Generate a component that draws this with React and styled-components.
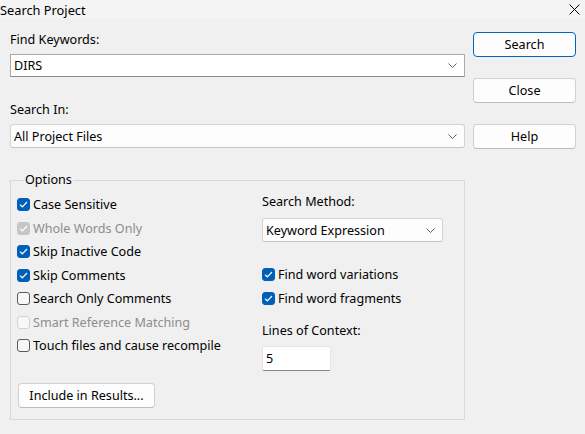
import styled, { createGlobalStyle } from "styled-components";

const GlobalStyle = createGlobalStyle`
  html, body {
    margin: 0;
    padding: 0;
    background: #f0f0f0;
  }
  body {
    font-family: "Noto Sans", "Open Sans", sans-serif;
    font-size: 12.6px;
    color: #000;
  }
`;

const Window = styled.div`
  width: 585px;
  height: 434px;
  display: flex;
  flex-direction: column;
  background: #f0f0f0;
  overflow: hidden;
`;

const TitleBar = styled.div`
  height: 19px;
  display: flex;
  align-items: center;
  justify-content: space-between;
  background: #f4f4f4;
  line-height: 18px;
`;

const Title = styled.span`
  font-size: 12.8px;
`;

const CloseX = styled.span`
  display: flex;
  margin-right: 5px;
`;

const Body = styled.div`
  display: flex;
  padding-left: 10px;
`;

const LeftColumn = styled.div`
  width: 455px;
  display: flex;
  flex-direction: column;
  padding-top: 12px;
`;

const RightColumn = styled.div`
  width: 103px;
  margin-left: 8px;
  padding-top: 13px;
  display: flex;
  flex-direction: column;
  gap: 21px;
`;

const Label = styled.div`
  height: 18px;
  line-height: 18px;
  margin-top: ${(p) => p.$top || 0}px;
  color: ${(p) => (p.$disabled ? "#8d8d8d" : "#000")};
`;

const Combo = styled.div`
  box-sizing: border-box;
  width: ${(p) => p.$width || 455}px;
  height: ${(p) => p.$height || 24}px;
  margin-top: ${(p) => p.$top || 0}px;
  display: flex;
  align-items: center;
  justify-content: space-between;
  padding: 0 7px 0 3px;
  background: ${(p) => (p.$editable ? "#ffffff" : "#fdfdfd")};
  border: 1px solid ${(p) => (p.$editable ? "#a9a9a9" : "#d3d3d3")};
  border-bottom-color: ${(p) => (p.$editable ? "#8a8a8a" : "#c4c4c4")};
  border-radius: ${(p) => (p.$editable ? 1 : 3)}px;
`;

const Button = styled.button`
  box-sizing: border-box;
  width: ${(p) => p.$width || 103}px;
  height: 25px;
  margin-top: ${(p) => p.$top || 0}px;
  margin-left: ${(p) => p.$left || 0}px;
  font-family: inherit;
  font-size: 12.6px;
  color: #000;
  background: #fdfdfd;
  border: 1px solid ${(p) => (p.$primary ? "#0067c0" : "#d0d0d0")};
  border-bottom-color: ${(p) => (p.$primary ? "#0067c0" : "#bdbdbd")};
  border-radius: 4px;
  padding: 0;
`;

const GroupBox = styled.fieldset`
  margin: 23px 0 0 0;
  padding: 4px 6px 11px 6px;
  min-width: 0;
  width: 455px;
  box-sizing: border-box;
  border: 1px solid #d9d9d9;
  display: flex;
`;

const Legend = styled.legend`
  margin-left: 7px;
  padding: 0 1px;
  line-height: 18px;
`;

const OptionsLeft = styled.div`
  width: 245px;
  display: flex;
  flex-direction: column;
  align-items: flex-start;
`;

const OptionsRight = styled.div`
  display: flex;
  flex-direction: column;
`;

const Row = styled.div`
  height: 23.5px;
  display: flex;
  align-items: center;
  gap: 3px;
  margin-top: ${(p) => p.$top || 0}px;
  color: ${(p) => (p.$disabled ? "#8d8d8d" : "#000")};
`;

const Box = styled.span`
  box-sizing: border-box;
  width: 13px;
  height: 13px;
  flex: none;
  display: flex;
  align-items: center;
  justify-content: center;
  border-radius: 3px;
  background: ${(p) =>
    p.$checked ? (p.$disabled ? "#c6c6c6" : "#005fb8") : "#f7f7f7"};
  border: 1px solid
    ${(p) =>
      p.$checked
        ? p.$disabled
          ? "#c6c6c6"
          : "#005fb8"
        : p.$disabled
        ? "#d3d3d3"
        : "#5b5b5b"};
`;

const TextInput = styled.div`
  box-sizing: border-box;
  width: 69px;
  height: 25px;
  margin-top: 6px;
  padding-left: 3px;
  display: flex;
  align-items: center;
  background: #fff;
  border: 1px solid #e5e5e5;
  border-bottom: 1px solid #868686;
  border-radius: 2px;
`;

const Chevron = () => (
  <svg width="9" height="5" viewBox="0 0 9 5">
    <path d="M0.5 0.5 L4.5 4.5 L8.5 0.5" fill="none" stroke="#5f5f5f" strokeWidth="1" />
  </svg>
);

function Check({ checked, disabled, top, children }) {
  return (
    <Row $disabled={disabled} $top={top}>
      <Box $checked={checked} $disabled={disabled}>
        {checked && (
          <svg width="9" height="7" viewBox="0 0 9 7">
            <path d="M1 3.6 L3.3 5.8 L8 1" fill="none" stroke="#fff" strokeWidth="1.2" />
          </svg>
        )}
      </Box>
      {children}
    </Row>
  );
}

export default function App() {
  return (
    <Window>
      <GlobalStyle />
      <TitleBar>
        <Title>Search Project</Title>
        <CloseX>
          <svg width="11" height="11" viewBox="0 0 11 11">
            <path d="M0.5 0.5 L10.5 10.5 M10.5 0.5 L0.5 10.5" stroke="#000" strokeWidth="1" />
          </svg>
        </CloseX>
      </TitleBar>
      <Body>
        <LeftColumn>
          <Label>Find Keywords:</Label>
          <Combo $editable $height={23} $top={5}>
            <span>DIRS</span>
            <Chevron />
          </Combo>
          <Label $top={24}>Search In:</Label>
          <Combo $top={5}>
            <span>All Project Files</span>
            <Chevron />
          </Combo>
          <GroupBox>
            <Legend>Options</Legend>
            <OptionsLeft>
              <Check checked>Case Sensitive</Check>
              <Check checked disabled>Whole Words Only</Check>
              <Check checked>Skip Inactive Code</Check>
              <Check checked>Skip Comments</Check>
              <Check>Search Only Comments</Check>
              <Check disabled>Smart Reference Matching</Check>
              <Check>Touch files and cause recompile</Check>
              <Button $width={137} $top={25} $left={1}>Include in Results...</Button>
            </OptionsLeft>
            <OptionsRight>
              <Label>Search Method:</Label>
              <Combo $width={181} $top={7}>
                <span>Keyword Expression</span>
                <Chevron />
              </Combo>
              <Check checked top={21}>Find word variations</Check>
              <Check checked>Find word fragments</Check>
              <Label $top={12}>Lines of Context:</Label>
              <TextInput>5</TextInput>
            </OptionsRight>
          </GroupBox>
        </LeftColumn>
        <RightColumn>
          <Button $primary>Search</Button>
          <Button>Close</Button>
          <Button>Help</Button>
        </RightColumn>
      </Body>
    </Window>
  );
}
